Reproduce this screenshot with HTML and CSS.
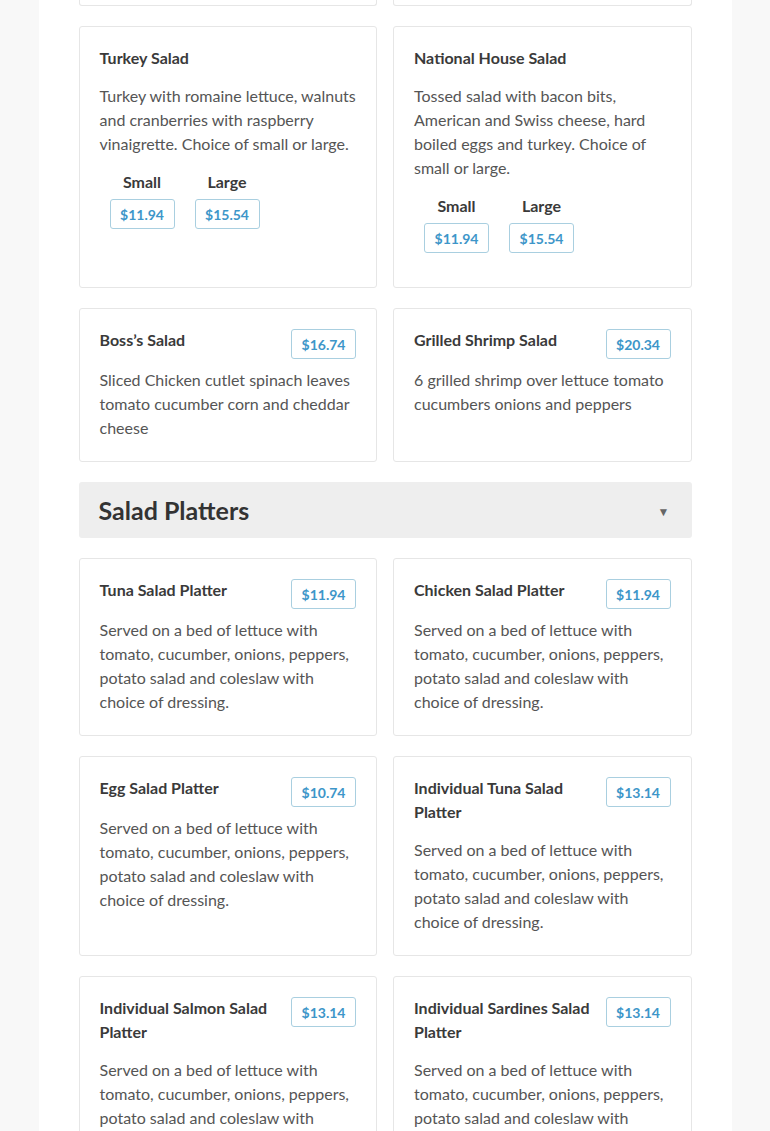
FILE: index.html
```html
<!DOCTYPE html>
<html lang="en">
<head>
<meta charset="utf-8">
<title>Menu - Salads</title>
<link rel="stylesheet" href="styles.css">
</head>
<body>
<div class="page">
  <div class="grid">
    <div class="card card--clipped"></div>
    <div class="card card--clipped"></div>

    <div class="card">
      <div class="card-head"><h3 class="title">Turkey Salad</h3></div>
      <p class="desc">Turkey with romaine lettuce, walnuts and cranberries with raspberry vinaigrette. Choice of small or large.</p>
      <div class="sizes">
        <div class="size"><span class="size-label">Small</span><span class="price">$11.94</span></div>
        <div class="size"><span class="size-label">Large</span><span class="price">$15.54</span></div>
      </div>
    </div>
    <div class="card">
      <div class="card-head"><h3 class="title">National House Salad</h3></div>
      <p class="desc">Tossed salad with bacon bits, American and Swiss cheese, hard boiled eggs and turkey. Choice of small or large.</p>
      <div class="sizes">
        <div class="size"><span class="size-label">Small</span><span class="price">$11.94</span></div>
        <div class="size"><span class="size-label">Large</span><span class="price">$15.54</span></div>
      </div>
    </div>

    <div class="card">
      <div class="card-head"><h3 class="title">Boss’s Salad</h3><span class="price">$16.74</span></div>
      <p class="desc">Sliced Chicken cutlet spinach leaves tomato cucumber corn and cheddar cheese</p>
    </div>
    <div class="card">
      <div class="card-head"><h3 class="title">Grilled Shrimp Salad</h3><span class="price">$20.34</span></div>
      <p class="desc">6 grilled shrimp over lettuce tomato cucumbers onions and peppers</p>
    </div>
  </div>

  <div class="section-head">
    <h2 class="section-title">Salad Platters</h2>
    <span class="caret">▼</span>
  </div>

  <div class="grid">
    <div class="card">
      <div class="card-head"><h3 class="title">Tuna Salad Platter</h3><span class="price">$11.94</span></div>
      <p class="desc">Served on a bed of lettuce with tomato, cucumber, onions, peppers, potato salad and coleslaw with choice of dressing.</p>
    </div>
    <div class="card">
      <div class="card-head"><h3 class="title">Chicken Salad Platter</h3><span class="price">$11.94</span></div>
      <p class="desc">Served on a bed of lettuce with tomato, cucumber, onions, peppers, potato salad and coleslaw with choice of dressing.</p>
    </div>
    <div class="card">
      <div class="card-head"><h3 class="title">Egg Salad Platter</h3><span class="price">$10.74</span></div>
      <p class="desc">Served on a bed of lettuce with tomato, cucumber, onions, peppers, potato salad and coleslaw with choice of dressing.</p>
    </div>
    <div class="card">
      <div class="card-head"><h3 class="title">Individual Tuna Salad Platter</h3><span class="price">$13.14</span></div>
      <p class="desc">Served on a bed of lettuce with tomato, cucumber, onions, peppers, potato salad and coleslaw with choice of dressing.</p>
    </div>
    <div class="card">
      <div class="card-head"><h3 class="title">Individual Salmon Salad Platter</h3><span class="price">$13.14</span></div>
      <p class="desc">Served on a bed of lettuce with tomato, cucumber, onions, peppers, potato salad and coleslaw with choice of dressing.</p>
    </div>
    <div class="card">
      <div class="card-head"><h3 class="title">Individual Sardines Salad Platter</h3><span class="price">$13.14</span></div>
      <p class="desc">Served on a bed of lettuce with tomato, cucumber, onions, peppers, potato salad and coleslaw with choice of dressing.</p>
    </div>
  </div>
</div>
</body>
</html>
```
FILE: styles.css
```css
* { box-sizing: border-box; }

html, body {
  margin: 0;
  padding: 0;
  background: #f8f8f8;
  font-family: Lato, "Open Sans", Arial, sans-serif;
  color: #555;
}

.page {
  width: 693px;
  margin: 0 auto;
  background: #fff;
  padding: 0 40px 40px;
  min-height: 1131px;
}

.grid {
  display: grid;
  grid-template-columns: 1fr 1fr;
  gap: 20px 16px;
}

.card {
  border: 1px solid #e6e6e6;
  border-radius: 3px;
  padding: 20px 20px 21px;
  background: #fff;
}

.card--clipped {
  height: 6px;
  padding: 0;
  border-top: 0;
  border-radius: 0 0 3px 3px;
}

.card-head {
  display: flex;
  align-items: flex-start;
  justify-content: space-between;
}

.title {
  flex: 1;
  margin: -1px 12px 14px 0;
  font-size: 16px;
  line-height: 24px;
  font-weight: 700;
  color: #3a3a3a;
}

.card-head .price {
  margin-bottom: 9px;
}

.price {
  display: inline-flex;
  align-items: center;
  justify-content: center;
  width: 65px;
  height: 30px;
  border: 1px solid #a9cfe0;
  border-radius: 3px;
  color: #3d96c9;
  font-size: 14px;
  font-weight: 700;
  flex-shrink: 0;
}

.desc {
  margin: 0;
  font-size: 16px;
  line-height: 24px;
  color: #555;
}

.sizes {
  display: flex;
  gap: 20px;
  margin: 14px 0 13px 10px;
}

.size {
  display: flex;
  flex-direction: column;
  align-items: center;
  gap: 5px;
}

.size-label {
  font-size: 16px;
  line-height: 24px;
  font-weight: 700;
  color: #3a3a3a;
}

.section-head {
  display: flex;
  align-items: center;
  justify-content: space-between;
  height: 56px;
  margin: 20px 0;
  padding: 0 22px 0 20px;
  background: #eeeeee;
  border-radius: 3px;
}

.section-title {
  margin: 0;
  font-size: 25px;
  font-weight: 700;
  color: #333;
}

.caret {
  font-size: 12px;
  color: #666;
  padding-top: 2px;
}
```
